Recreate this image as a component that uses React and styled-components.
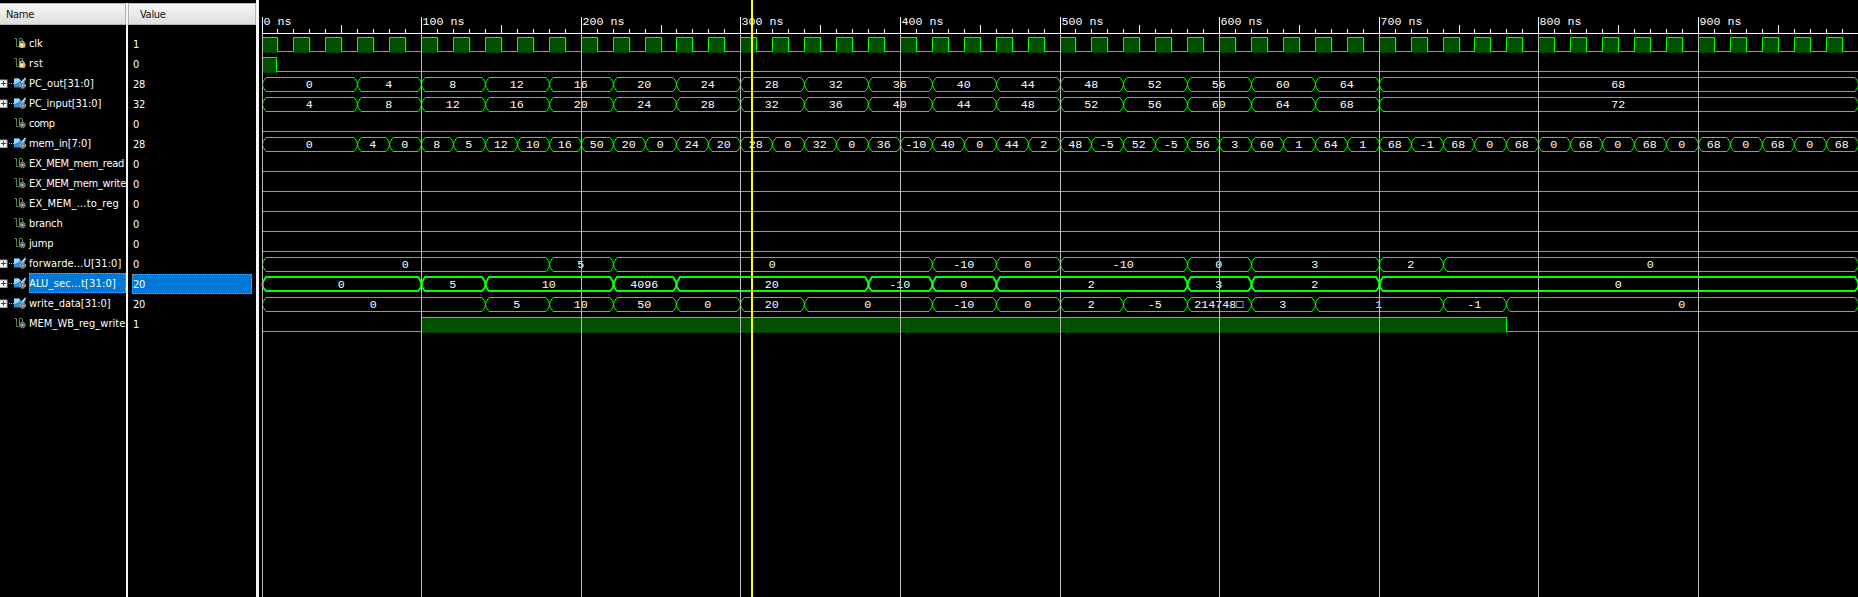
import React from 'react';
import styled, { createGlobalStyle, css } from 'styled-components';

const Global = createGlobalStyle`
  html, body { margin: 0; padding: 0; background: #000; overflow: hidden; }
`;

const Viewer = styled.main`
  display: flex;
  width: 1858px;
  height: 597px;
  background: #000;
  color: #fff;
  overflow: hidden;
  font-family: 'DejaVu Sans Condensed', 'DejaVu Sans', sans-serif;
  font-stretch: condensed;
  font-size: 11px;
`;

const Column = styled.section`
  box-sizing: border-box;
  flex: none;
  width: ${(p) => p.$width}px;
  padding-top: 3px;
  overflow: hidden;
`;

const ColumnHeader = styled.header`
  box-sizing: border-box;
  height: 22px;
  padding-left: ${(p) => p.$indent}px;
  line-height: 21px;
  letter-spacing: -0.3px;
  color: #111;
  background: linear-gradient(#f6f6f7, #dededf);
  border: 1px solid #b2b5b2;
  border-left-width: ${(p) => (p.$first ? 0 : 1)}px;
`;

const Divider = styled.div`
  flex: none;
  box-sizing: border-box;
  width: ${(p) => p.$width}px;
  margin-top: ${(p) => p.$top || 0}px;
  background: #f4f4f4;
`;

const Rows = styled.div`
  padding-top: ${(p) => p.$top}px;
`;

const selection = css`
  background: #0078d7;
  outline: 1px dotted #ff8728;
  outline-offset: -1px;
`;

const NameRow = styled.div`
  display: flex;
  height: 20px;
`;

const IconSlot = styled.div`
  flex: none;
  width: 29px;
  height: 20px;
`;

const NameText = styled.span`
  flex: 1 0 auto;
  height: 20px;
  line-height: 22px;
  white-space: nowrap;
  letter-spacing: ${(p) => p.$track || 0}px;
  ${(p) => p.$selected && selection}
`;

const ValueText = styled.div`
  box-sizing: border-box;
  height: 20px;
  width: 120px;
  margin-left: 4px;
  padding-left: 1px;
  line-height: 22px;
  letter-spacing: -0.3px;
  ${(p) => p.$selected && selection}
`;

const Wave = styled.svg`
  display: block;
  flex: none;
  width: 1599px;
  height: 597px;
  font-family: 'Liberation Mono', 'DejaVu Sans Mono', monospace;
  font-size: 11.67px;
`;

const seq = (start, step, values) => values.map((v, i) => [v, start + step * (i + 1)]);

const pcOut = [[0, 60], [4, 100], ...seq(100, 40, [8, 12, 16, 20, 24, 28, 32, 36, 40, 44, 48, 52, 56, 60, 64]), [68, 1000]];
const pcIn = pcOut.map(([v, end]) => [v + 4, end]);
const memIn = [[0, 60], ...seq(60, 20, [
  4, 0, 8, 5, 12, 10, 16, 50, 20, 0, 24, 20, 28, 0, 32, 0, 36, -10, 40, 0, 44, 2, 48, -5,
  52, -5, 56, 3, 60, 1, 64, 1, 68, -1, 68, 0, 68, 0, 68, 0, 68, 0, 68, 0, 68, 0, 68,
])];
const clock = Array.from({ length: 50 }, (_, i) => [i * 20, i * 20 + 10]);

const signals = [
  { name: 'clk', track: -0.15, value: 1, kind: 'input', high: clock },
  { name: 'rst', track: 0.35, value: 0, kind: 'input', high: [[0, 9.2]] },
  { name: 'PC_out[31:0]', track: 0.08, value: 28, bus: pcOut },
  { name: 'PC_input[31:0]', track: -0.07, value: 32, bus: pcIn },
  { name: 'comp', track: -0.45, value: 0, high: [] },
  { name: 'mem_in[7:0]', track: -0.1, value: 28, bus: memIn },
  { name: 'EX_MEM_mem_read', track: -0.25, value: 0, high: [] },
  { name: 'EX_MEM_mem_write', track: -0.28, value: 0, high: [] },
  { name: 'EX_MEM_...to_reg', track: 0.2, value: 0, high: [] },
  { name: 'branch', track: -0.15, value: 0, high: [] },
  { name: 'jump', track: -0.15, value: 0, high: [] },
  { name: 'forwarde...U[31:0]', track: 0.1, value: 0, bus: [[0, 180], [5, 220], [0, 420], [-10, 460], [0, 500], [-10, 580], [0, 620], [3, 700], [2, 740], [0, 1000]] },
  { name: 'ALU_sec...t[31:0]', track: 0.19, value: 20, selected: true, bus: [[0, 100], [5, 140], [10, 220], [4096, 260], [20, 380], [-10, 420], [0, 460], [2, 580], [3, 620], [2, 700], [0, 1000]] },
  { name: 'write_data[31:0]', track: -0.03, value: 20, bus: [[0, 140], [5, 180], [10, 220], [50, 260], [0, 300], [20, 340], [0, 420], [-10, 460], [0, 500], [2, 540], [-5, 580], ['214748□', 620], [3, 660], [1, 740], [-1, 780], [0, 1000]] },
  { name: 'MEM_WB_reg_write', track: 0.03, value: 1, high: [[100, 780]] },
];

// The wave panel begins 259px into the window; time zero is 3px inside it.
const X = (t) => Math.floor(3 + 1.596 * t);

const GREEN = '#00ff00';

const Icon = styled.svg`
  display: block;
  width: 29px;
  height: 20px;
`;

function SignalIcon({ kind, bus }) {
  const body = kind === 'input' ? '#e8b04a' : '#858585';
  return (
    <Icon viewBox="0 0 29 20">
      {bus ? (
        <>
          <rect x="-0.5" y="7" width="7.5" height="7.5" fill="#fff" stroke="#9aa2b0" />
          <path d="M1 10.5H6M3.5 8V13" stroke="#24408e" fill="none" />
          <path d="M9 10.5H14" stroke="#9a9a9a" strokeDasharray="1 1" />
          <path d="M14 5.5H19L22 9L25.5 5V8L22 13L19 14.5H14Z" fill="#2f8fd6" />
          <path d="M14 5.5H19L20.5 8L14 11.5Z" fill="#9cd6fa" />
          <path d="M21.5 9.5L25.5 5" stroke="#c4e6fb" strokeWidth="1.4" />
          <circle cx="22.7" cy="12.6" r="2.5" fill="#555" stroke="#aaa" strokeWidth="1.6" strokeDasharray="1.3 .7" />
          <circle cx="22.7" cy="12.6" r="1" fill="#ddd" />
        </>
      ) : (
        <>
          <path d="M14 5.5H16.5V13.5H19.5V5.5H22.5V9" fill="none" stroke="#557f4c" />
          {kind === 'input' ? (
            <>
              <path d="M20 10V9Q22 6.6 24 9V10" stroke="#c9c9c9" fill="none" />
              <rect x="19" y="9.6" width="6.5" height="5.4" rx="2" fill={body} />
              <rect x="20.6" y="10.8" width="2.4" height="2.6" fill="#fbf0d8" />
            </>
          ) : (
            <>
              <circle cx="22.4" cy="12" r="2.6" fill="#555" stroke={body} strokeWidth="1.6" strokeDasharray="1.4 .6" />
              <circle cx="22.4" cy="12" r="1" fill="#ddd" />
            </>
          )}
        </>
      )}
    </Icon>
  );
}

function DigitalTrace({ top, high }) {
  const low = top + 14;
  let d = `M3 ${low + 0.5}`;
  high.forEach(([a, b]) => {
    const xa = X(a) + 0.5;
    const xb = X(b) + 0.5;
    d += `H${xa}V${top + 0.5}H${xb}V${low + 0.5}`;
  });
  d += 'H1599';
  return (
    <>
      {high.map(([a, b]) => (
        <g key={a}>
          <rect x={X(a)} y={top} width={X(b) - X(a) + 2} height={16} fill="#003000" />
          <rect x={X(a) + 1} y={top + 1} width={X(b) - X(a)} height={14.6} fill="#005000" />
        </g>
      ))}
      <path d={d} fill="none" stroke={GREEN} />
    </>
  );
}

function BusTrace({ top, segments, thick }) {
  const t = thick ? top : top + 0.5;
  const b = thick ? top + 14 : top + 14.5;
  const m = top + 7.5;
  let start = 0;
  return segments.map(([value, end]) => {
    const xa = X(start) + 0.5;
    const xb = X(end) + 0.5;
    start = end;
    return (
      <g key={end}>
        <path
          d={`M${xa} ${m}L${xa + 0.7} ${m - 3}L${xa + 3.5} ${t}H${xb - 3.5}L${xb - 0.7} ${m - 3}L${xb} ${m}L${xb - 0.7} ${m + 3}L${xb - 3.5} ${b}H${xa + 3.5}L${xa + 0.7} ${m + 3}Z`}
          fill="none"
          stroke={GREEN}
          strokeWidth={thick ? 2 : 1}
        />
        <text x={(xa + xb) / 2 - 0.7} y={top + 11} textAnchor="middle" fill="#fff">{value}</text>
      </g>
    );
  });
}

function Ruler() {
  const ticks = Array.from({ length: 100 }, (_, i) => i * 10);
  return (
    <g shapeRendering="crispEdges">
      <rect x="3" y="33" width="1596" height="1" fill="#fff" />
      {ticks.map((t) => {
        const y = t % 100 === 0 ? 17 : t % 50 === 0 ? 25 : 29;
        return <rect key={t} x={X(t)} y={y} width="1" height={34 - y} fill="#fff" />;
      })}
    </g>
  );
}

export default function App() {
  const hundreds = Array.from({ length: 10 }, (_, i) => i * 100);
  return (
    <>
      <Global />
      <Viewer>
        <Column $width={126}>
          <ColumnHeader $indent={6} $first>Name</ColumnHeader>
          <Rows $top={8}>
            {signals.map((s) => (
              <NameRow key={s.name}>
                <IconSlot><SignalIcon kind={s.kind} bus={!!s.bus} /></IconSlot>
                <NameText $track={s.track} $selected={s.selected}>{s.name}</NameText>
              </NameRow>
            ))}
          </Rows>
        </Column>
        <Divider $width={2} $top={3} />
        <Column $width={128}>
          <ColumnHeader $indent={11}>Value</ColumnHeader>
          <Rows $top={9}>
            {signals.map((s) => (
              <ValueText key={s.name} $selected={s.selected}>{s.value}</ValueText>
            ))}
          </Rows>
        </Column>
        <Divider $width={3} />
        <Wave viewBox="0 0 1599 597">
          <Ruler />
          {hundreds.map((t) => (
            <text key={t} x={X(t) + 1.5} y="25" fill="#fff" xmlSpace="preserve">{`${t} ns`}</text>
          ))}
          {signals.map((s, i) => (s.bus
            ? <BusTrace key={s.name} top={37 + 20 * i} segments={s.bus} thick={s.selected} />
            : <DigitalTrace key={s.name} top={37 + 20 * i} high={s.high} />))}
          {hundreds.map((t) => (
            <rect key={t} x={X(t)} y="34" width="1" height="563" fill="#b8b8b8" />
          ))}
          <rect x="492" y="0" width="2" height="597" fill="#ffff00" />
        </Wave>
      </Viewer>
    </>
  );
}
